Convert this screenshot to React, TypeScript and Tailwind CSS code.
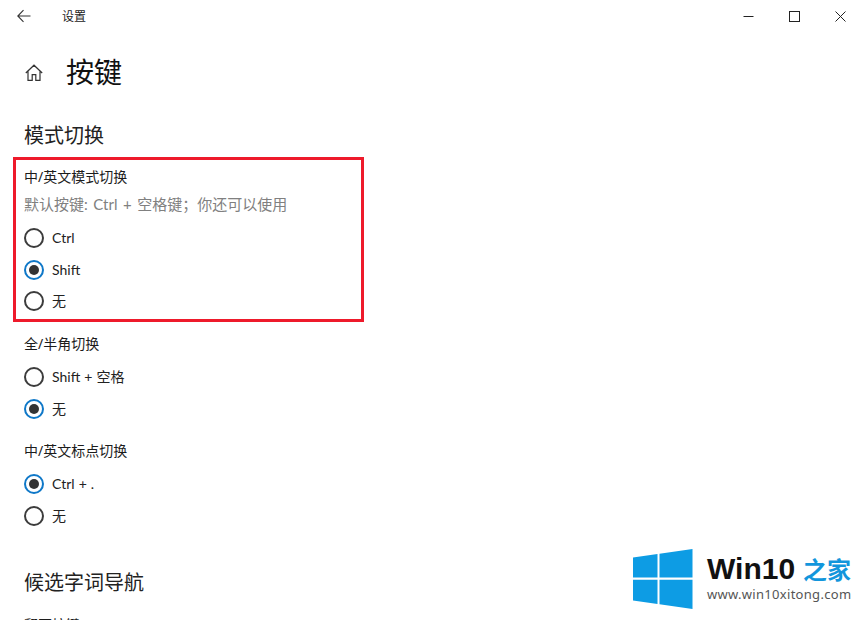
import React from "react";

const latin = { fontFamily: 'Lato, "Noto Sans CJK SC", sans-serif' };

function Radio({ label, checked }: { label: string; checked?: boolean }) {
  return (
    <div className="flex h-5 items-center gap-2">
      <span
        className={
          checked
            ? "flex h-5 w-5 items-center justify-center rounded-full border-2 border-[#0f78c8]"
            : "h-5 w-5 rounded-full border-2 border-[#3c3c3c]"
        }
      >
        {checked && <span className="h-2.5 w-2.5 rounded-full bg-[#333333]" />}
      </span>
      <span className="text-[14px] leading-5 text-[#222222] [word-spacing:0.5px]" style={latin}>{label}</span>
    </div>
  );
}

function Group({ title, children }: { title: string; children: React.ReactNode }) {
  return (
    <div className="flex flex-col">
      <div className="text-[14px] leading-5 text-[#1c1c1c]">{title}</div>
      {children}
    </div>
  );
}

export default function App() {
  return (
    <div
      className="relative h-[620px] w-[863px] overflow-hidden bg-white"
      style={{ fontFamily: '"Noto Sans", "Noto Sans CJK SC", sans-serif' }}
    >
      <header className="flex h-8 items-center">
        <div className="flex w-[62px] justify-center pr-[14px]">
          <svg width="16" height="16" viewBox="0 0 16 16" fill="none" stroke="#333" strokeWidth="1.1">
            <path d="M14.5 8H1.8M7.5 2.2 1.8 8l5.7 5.8" />
          </svg>
        </div>
        <span className="mt-0.5 text-xs text-[#222222]">设置</span>
        <div className="ml-auto flex">
          <div className="flex h-8 w-[46px] items-center justify-center">
            <svg width="11" height="11" viewBox="0 0 11 11" fill="none" stroke="#222" strokeWidth="1">
              <path d="M0.5 5.5h10" />
            </svg>
          </div>
          <div className="flex h-8 w-[46px] items-center justify-center">
            <svg width="11" height="11" viewBox="0 0 11 11" fill="none" stroke="#222" strokeWidth="1">
              <rect x="0.5" y="0.5" width="10" height="10" />
            </svg>
          </div>
          <div className="flex h-8 w-[46px] items-center justify-center">
            <svg width="11" height="11" viewBox="0 0 11 11" fill="none" stroke="#222" strokeWidth="1">
              <path d="M0.5 0.5l10 10M10.5 0.5l-10 10" />
            </svg>
          </div>
        </div>
      </header>

      <main className="pl-6">
        <div className="mt-[18px] flex h-11 items-center">
          <svg width="20" height="20" viewBox="0 0 20 20" fill="none" stroke="#333" strokeWidth="1.2" className="mt-0.5">
            <path d="M1.8 10 10 2.2 18.2 10M4 8v9.3h4.2v-5.6h3.6v5.6H16V8" />
          </svg>
          <h1 className="ml-[22px] text-[28px] leading-none text-[#111111]">按键</h1>
        </div>

        <h2 className="mt-[28px] text-xl leading-7 text-[#222222]">模式切换</h2>

        <div className="mt-[17px] flex flex-col">
          <Group title="中/英文模式切换">
            <div className="mt-[7px] text-[15px] leading-5 text-[#808080] [word-spacing:1.7px]" style={latin}>默认按键: Ctrl + 空格键；你还可以使用</div>
            <div className="mt-[14px] flex flex-col gap-3">
              <Radio label="Ctrl" />
              <Radio label="Shift" checked />
              <div className="-mt-px">
                <Radio label="无" />
              </div>
            </div>
          </Group>
          <div className="mt-[23px]">
            <Group title="全/半角切换">
              <div className="mt-[13px] flex flex-col gap-3">
                <Radio label="Shift + 空格" />
                <Radio label="无" checked />
              </div>
            </Group>
          </div>
          <div className="mt-[22px]">
            <Group title="中/英文标点切换">
              <div className="mt-[13px] flex flex-col gap-3">
                <Radio label="Ctrl + ." checked />
                <Radio label="无" />
              </div>
            </Group>
          </div>
        </div>

        <h2 className="mt-[43px] text-xl leading-7 text-[#222222]">候选字词导航</h2>
        <div className="mt-[18px] text-[14px] leading-5 text-[#1c1c1c]">翻页按键</div>
      </main>

      <div className="absolute left-[13px] top-[157px] h-[165px] w-[351px] border-[3px] border-[#ee1a2b]" />

      <div className="absolute left-[625px] top-[540px] flex h-[76px] w-[234px] items-center gap-[14px] bg-white pl-2">
        <svg width="60" height="60" viewBox="0 0 60 60" fill="#0d9ce4" className="mt-px shrink-0">
          <path d="M0 8.5 24.5 5v23.5H0ZM26.5 4.7 59.5 0v28.5h-33ZM0 30.8h24.5V55L0 51.5ZM26.5 30.8h33V60l-33-4.7Z" />
        </svg>
        <div className="flex flex-col">
          <div className="-mt-0.5 flex items-baseline gap-2">
            <span className="text-[30px] font-bold leading-8 text-[#111111]" style={{ fontFamily: '"Liberation Sans", sans-serif' }}>
              Win10
            </span>
            <span className="text-2xl font-bold leading-8 text-[#1296dc]">之家</span>
          </div>
          <span className="text-[13px] leading-4 tracking-[0.3px] text-[#555555]">www.win10xitong.com</span>
        </div>
      </div>
    </div>
  );
}
